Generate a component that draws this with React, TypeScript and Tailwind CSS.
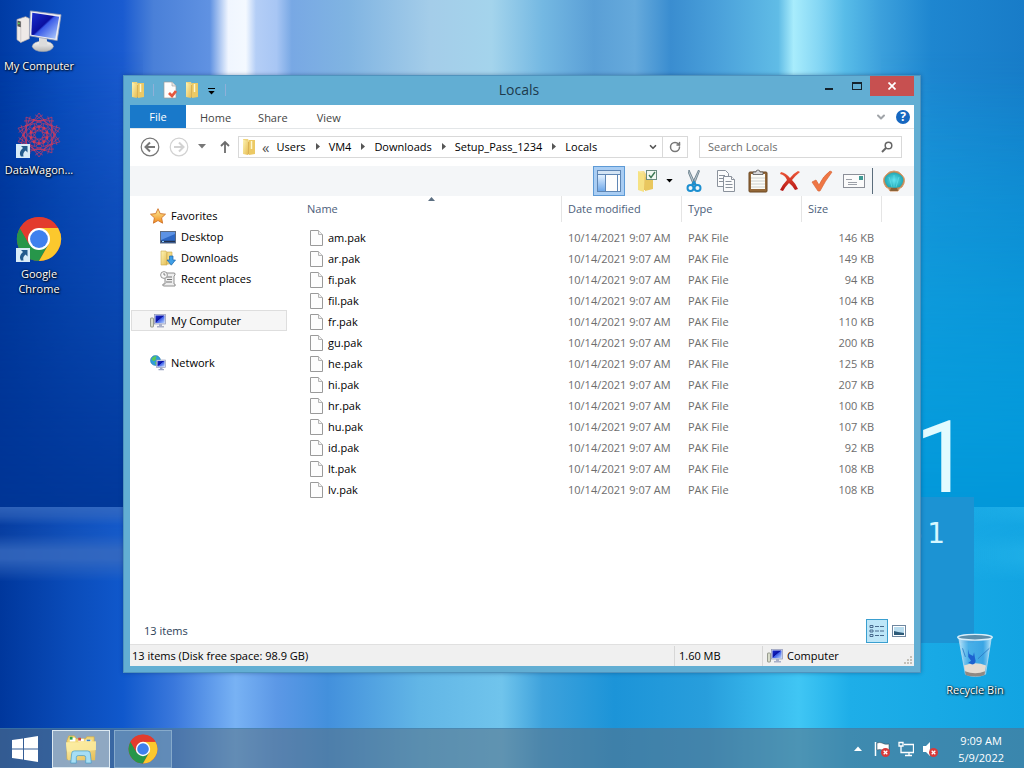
import React from "react";
import { ChevronDown, RotateCw } from "lucide-react";

type IconProps = { className?: string };

const files = [
  ["am.pak", "146 KB"],
  ["ar.pak", "149 KB"],
  ["fi.pak", "94 KB"],
  ["fil.pak", "104 KB"],
  ["fr.pak", "110 KB"],
  ["gu.pak", "200 KB"],
  ["he.pak", "125 KB"],
  ["hi.pak", "207 KB"],
  ["hr.pak", "100 KB"],
  ["hu.pak", "107 KB"],
  ["id.pak", "92 KB"],
  ["lt.pak", "108 KB"],
  ["lv.pak", "108 KB"],
];

function Gradients() {
  return (
    <svg className="absolute h-0 w-0" aria-hidden="true">
      <defs>
        <linearGradient id="screen" x1="0" y1="0" x2="1" y2="1">
          <stop offset="0" stopColor="#1a2fd0" />
          <stop offset="0.45" stopColor="#0a10a0" />
          <stop offset="0.5" stopColor="#3a5be8" />
          <stop offset="1" stopColor="#b9d6ff" />
        </linearGradient>
        <linearGradient id="folder" x1="0" y1="0" x2="1" y2="1">
          <stop offset="0" stopColor="#fdf4b4" />
          <stop offset="1" stopColor="#e6bd54" />
        </linearGradient>
        <linearGradient id="metal" x1="0" y1="0" x2="0" y2="1">
          <stop offset="0" stopColor="#fafafa" />
          <stop offset="1" stopColor="#b4b4b4" />
        </linearGradient>
        <linearGradient id="glass" x1="0" y1="0" x2="1" y2="0">
          <stop offset="0" stopColor="#d8f1ff" stopOpacity="0.85" />
          <stop offset="0.3" stopColor="#5fb4ea" stopOpacity="0.7" />
          <stop offset="0.75" stopColor="#4aa4e4" stopOpacity="0.7" />
          <stop offset="1" stopColor="#d8f1ff" stopOpacity="0.85" />
        </linearGradient>
        <linearGradient id="red" x1="0" y1="0" x2="0" y2="1">
          <stop offset="0" stopColor="#ef5a3a" />
          <stop offset="1" stopColor="#b51414" />
        </linearGradient>
        <linearGradient id="star" x1="0" y1="0" x2="0" y2="1">
          <stop offset="0" stopColor="#fff3a0" />
          <stop offset="1" stopColor="#f08a1a" />
        </linearGradient>
        <linearGradient id="pane" x1="0" y1="0" x2="0" y2="1">
          <stop offset="0" stopColor="#e3f1ff" />
          <stop offset="1" stopColor="#6ea8ea" />
        </linearGradient>
        <radialGradient id="shell">
          <stop offset="0" stopColor="#5fe0ee" />
          <stop offset="1" stopColor="#22a8b4" />
        </radialGradient>
      </defs>
    </svg>
  );
}

function ComputerIcon({ className }: IconProps) {
  return (
    <svg viewBox="0 0 48 48" className={className} aria-hidden="true">
      <path d="M1 12l9-3 4 2v21l-9 4-4-3z" fill="#efeae8" stroke="#b0a8a8" strokeWidth="0.7" />
      <path d="M5 14v22" stroke="#c8c2c2" strokeWidth="0.8" />
      <path d="M1.500 13l3.500 1v6l-3.500-1z" fill="#555" />
      <circle cx="3" cy="16" r="1" fill="#5fd65a" />
      <ellipse cx="28" cy="40" rx="11" ry="5.500" fill="url(#metal)" stroke="#aaa" strokeWidth="0.6" />
      <path d="M24 30l8 1 1 9h-9z" fill="#dcdcdc" />
      <path d="M15 3l32 4-4 27-29-5z" fill="#eceef4" stroke="#9aa0b4" strokeWidth="0.8" />
      <path d="M17 5l28 4-4 23-25-4z" fill="url(#screen)" />
    </svg>
  );
}

function SmallComputerIcon({ className }: IconProps) {
  return (
    <svg viewBox="0 0 16 16" className={className} aria-hidden="true">
      <rect x="0.500" y="5" width="3" height="9" rx="0.500" fill="#d8dccb" stroke="#83887c" strokeWidth="0.8" />
      <rect x="4.500" y="1.500" width="11" height="9.500" fill="#d9def0" stroke="#8d95b5" strokeWidth="0.7" />
      <rect x="5.500" y="2.500" width="9" height="7.500" fill="url(#screen)" />
      <path d="M9 11h3v2h2v1.500H7V13h2z" fill="#a9b0c8" />
    </svg>
  );
}

function NetworkIcon({ className }: IconProps) {
  return (
    <svg viewBox="0 0 16 16" className={className} aria-hidden="true">
      <circle cx="5.500" cy="5.500" r="5" fill="#2f9fd8" stroke="#1c6ea8" strokeWidth="0.5" />
      <path d="M1.500 4c2-3 4-3 5-3-1 2 0 2-1 4s-3 1-4-1zM5 7c2 0 3 1 2 3-1 0-2-1-2-3z" fill="#5cc657" />
      <rect x="6.500" y="5" width="9" height="7.500" fill="#d3daf0" stroke="#8d95b5" strokeWidth="0.6" />
      <rect x="7.500" y="6" width="7" height="5.500" fill="url(#screen)" />
      <path d="M10 12.500h2.500v1.500h1.500v1.200H8.500V14H10z" fill="#9aa4c4" />
    </svg>
  );
}

function ShortcutBadge() {
  return (
    <svg viewBox="0 0 14 14" className="absolute bottom-0 left-0 size-[14px]" aria-hidden="true">
      <rect width="14" height="14" fill="#d9ecf8" />
      <path d="M5 2h6.500v6.500L9.600 6.600C7.500 8.400 6.800 10 7.500 12.500H5C3 9.500 4 6.500 7 4z" fill="#235a8c" />
    </svg>
  );
}

function ChromeIcon({ className }: IconProps) {
  return (
    <svg viewBox="0 0 48 48" className={className} aria-hidden="true">
      <circle cx="24" cy="24" r="23" fill="#e33b2e" />
      <path d="M4.080 12.500A23 23 0 0 0 24 47L33.960 29.750 24 24 14.040 29.750z" fill="#27964a" />
      <path d="M43.920 12.500A23 23 0 0 1 24 47L33.960 29.750 24 12.500z" fill="#fcc82d" />
      <path d="M4.080 12.500A23 23 0 0 1 43.920 12.500H24L14.040 29.750z" fill="#e33b2e" />
      <circle cx="24" cy="24" r="11.500" fill="#fff" />
      <circle cx="24" cy="24" r="9.300" fill="#3f80ee" />
    </svg>
  );
}

const petals = Array.from({ length: 10 }, (_, i) => i * 36);

function WagonIcon({ className }: IconProps) {
  return (
    <svg viewBox="0 0 48 48" className={className} aria-hidden="true">
      <g fill="none" stroke="#b83a6a" strokeWidth="0.8">
        {petals.map((a) => (
          <g key={a} transform={`rotate(${a} 24 24)`}>
            <path d="M24 1L34 16 24 20 14 16zM20 3L36 14M28 3L12 14M19 15l11 2" />
            <circle cx="24" cy="15" r="1.300" fill="#dc3c50" stroke="none" />
            <circle cx="29" cy="8" r="0.900" fill="#dc3c50" stroke="none" />
          </g>
        ))}
      </g>
    </svg>
  );
}

function BinIcon({ className }: IconProps) {
  return (
    <svg viewBox="0 0 48 48" className={className} aria-hidden="true">
      <path d="M7 6h34l-6 38q-11 5-21 0z" fill="url(#glass)" stroke="#b9dcf0" strokeWidth="0.8" />
      <path d="M12.500 35q12-5 23 0l-1.500 9q-10 4-19.500 0z" fill="#e4dcd2" />
      <path d="M13.500 41q11 4 21 0l-.6 4q-9 3-19.600 0z" fill="#8f8983" />
      <path d="M17 18l1 5 4 2 1-4 1 6q2 6-3 7l-4-2 3-2-3-4z" fill="#1c62d0" />
      <path d="M39 17L27 28M14 26l-3-9" stroke="#2c7cc4" strokeWidth="0.9" fill="none" />
      <ellipse cx="24" cy="5.500" rx="18" ry="3" fill="#5c8daa" stroke="#d9eefa" strokeWidth="1.500" />
    </svg>
  );
}

function FolderIcon({ className }: IconProps) {
  return (
    <svg viewBox="0 0 16 18" className={className} aria-hidden="true">
      <path d="M2 1h5l1 2v13H2z" fill="#f0d47c" />
      <path d="M8 2h6v14l-6 1z" fill="#ecc964" />
      <path d="M2 1.500l5 2V17l-5-1z" fill="url(#folder)" />
      <path d="M10.500 3v8" stroke="#fdf6cc" strokeWidth="1.500" />
      <path d="M7.500 4v12.500" stroke="#c9983a" strokeWidth="0.6" />
    </svg>
  );
}

function DocumentCheckIcon({ className }: IconProps) {
  return (
    <svg viewBox="0 0 16 18" className={className} aria-hidden="true">
      <path d="M2 1h8l4 4v12H2z" fill="#fdfdfd" stroke="#9b9b9b" strokeWidth="0.7" />
      <path d="M10 1v4h4" fill="#e7e7e7" stroke="#9b9b9b" strokeWidth="0.6" />
      <path d="M7 12l3 3 4-5" fill="none" stroke="#e4573d" strokeWidth="2.800" />
    </svg>
  );
}

function FileIcon() {
  return (
    <svg viewBox="0 0 13 16" className="h-4 w-[13px] shrink-0" aria-hidden="true">
      <path d="M.5.5h8l4 4v11H.5z" fill="#fdfdfd" stroke="#9a9a9a" />
      <path d="M8.500.5v4h4" fill="#f1f1f1" stroke="#b4b4b4" />
    </svg>
  );
}

function StarIcon() {
  return (
    <svg viewBox="0 0 16 16" className="size-4" aria-hidden="true">
      <path d="M8 .7l2.200 4.900 5.300.6-3.900 3.600 1 5.400L8 12.500l-4.600 2.700 1-5.400L.5 6.200l5.300-.6z" fill="url(#star)" stroke="#d0742a" strokeWidth="0.9" />
    </svg>
  );
}

function DesktopIcon() {
  return (
    <svg viewBox="0 0 16 16" className="size-4" aria-hidden="true">
      <rect x="0.500" y="2.500" width="15" height="11.500" fill="#2d67c4" stroke="#5c6a80" />
      <path d="M1 3h14v2L1 11z" fill="#5c92e4" />
      <path d="M1 12.500h14" stroke="#23324e" strokeWidth="1.500" />
      <path d="M2 12.500h2" stroke="#8fd0ff" />
    </svg>
  );
}

function DownloadsIcon() {
  return (
    <svg viewBox="0 0 16 16" className="size-4" aria-hidden="true">
      <path d="M1 1h5l1 1.500V15H1z" fill="url(#folder)" stroke="#c9a84a" strokeWidth="0.6" />
      <path d="M7 2h5v12H7z" fill="#f3d983" stroke="#c9a84a" strokeWidth="0.6" />
      <path d="M9.500 6h3.500v4h2.500l-4.200 5.200L7 10h2.500z" fill="#3f9fe6" stroke="#1a65ac" strokeWidth="0.7" />
    </svg>
  );
}

function RecentIcon() {
  return (
    <svg viewBox="0 0 16 16" className="size-4" aria-hidden="true">
      <path d="M4 2h10q1.500 0 1 2l-1 1v8q2 0 1 2H4q-2 0-1-2h2V5z" fill="#eee" stroke="#858585" strokeWidth="0.9" />
      <path d="M7 6h5M7 8.500h5M6 11h6" stroke="#777" />
      <circle cx="4" cy="4" r="3.400" fill="#f8f8f8" stroke="#8a8a8a" strokeWidth="0.9" />
      <path d="M4 2v2h1.500" fill="none" stroke="#666" strokeWidth="0.8" />
    </svg>
  );
}

function Caret({ className }: IconProps) {
  return (
    <svg viewBox="0 0 8 5" className={className} aria-hidden="true">
      <path d="M0 0h8L4 4.500z" fill="currentColor" />
    </svg>
  );
}

function ToolButton({ label, children }: { label: string; children: React.ReactNode }) {
  return (
    <button aria-label={label} className="flex h-[30px] w-8 items-center justify-center">
      {children}
    </button>
  );
}

function Toolbar() {
  return (
    <div className="flex h-[30px] items-center justify-end bg-[#f4f6f8] pr-1" role="toolbar" aria-label="Classic toolbar">
      <button aria-label="Navigation pane" aria-pressed="true" className="flex h-[30px] w-8 items-center justify-center border border-[#5d9ad6] bg-[#a9cdf3]">
        <svg viewBox="0 0 24 22" className="h-[22px] w-6" aria-hidden="true">
          <rect x="0.500" y="0.500" width="23" height="21" fill="#fdfdfd" stroke="#5f86b4" />
          <path d="M1 1h22v3H1z" fill="#d4e4f4" />
          <path d="M1 4.500h22" stroke="#5f86b4" />
          <rect x="1" y="5" width="7" height="16" fill="url(#pane)" />
          <path d="M8.500 5v16M20.500 5v16" stroke="#5f86b4" />
        </svg>
      </button>
      <button aria-label="Folder options" className="ml-3 flex h-[30px] items-center gap-[7px]">
        <svg viewBox="0 0 22 24" className="h-6 w-[22px]" aria-hidden="true">
          <path d="M1 2h6l2 3v16H1z" fill="url(#folder)" />
          <path d="M8 8h8v12l-8 2z" fill="#e9c75e" />
          <path d="M1 2l6 4v17l-6-2z" fill="#f6e284" />
          <rect x="9.500" y="1.500" width="10" height="9" fill="#f2f8f2" stroke="#6a8a7e" />
          <path d="M12 6l2 2.500L18 3" fill="none" stroke="#3e7a54" strokeWidth="1.400" />
        </svg>
        <Caret className="h-1 w-[7px] text-black" />
      </button>
      <div className="w-[5px]" />
      <ToolButton label="Cut">
        <svg viewBox="0 0 16 24" className="h-6 w-4" aria-hidden="true">
          <path d="M3 1l6.500 14-2 1L2.500 4zM13.500 2L8 16l-2-1L12.500 1z" fill="#b9c8d2" stroke="#5d7480" strokeWidth="0.8" />
          <circle cx="4.500" cy="19" r="3" fill="none" stroke="#1c8fd0" strokeWidth="2" />
          <circle cx="11.500" cy="19" r="3" fill="none" stroke="#1c8fd0" strokeWidth="2" />
          <path d="M6 16l2-3 2 3" fill="none" stroke="#1c8fd0" strokeWidth="2" />
        </svg>
      </ToolButton>
      <ToolButton label="Copy">
        <svg viewBox="0 0 20 24" className="h-6 w-5" aria-hidden="true" stroke="#8b929c" fill="#fcfcfc">
          <path d="M1.500 1.500h8l3 3v13h-11z" />
          <path d="M3 6.500h6M3 9.500h4M3 12.500h4" />
          <path d="M7.500 7.500h8l3 3v12h-11z" />
          <path d="M15.500 7.500v3h3M9.500 12.500h6M9.500 15.500h7M9.500 18.500h7" />
        </svg>
      </ToolButton>
      <ToolButton label="Paste">
        <svg viewBox="0 0 20 24" className="h-6 w-5" aria-hidden="true">
          <rect x="1" y="3" width="18" height="20" rx="1" fill="#946838" stroke="#6c4822" />
          <rect x="3" y="5" width="14" height="15" fill="#fdfdf7" />
          <path d="M3 9h14M3 12h14M3 15h14M3 18h14" stroke="#bfc4c4" strokeWidth="0.8" />
          <path d="M5 5.500V3h3q0-2 2-2t2 2h3v2.500z" fill="#dadada" stroke="#555" strokeWidth="0.8" />
        </svg>
      </ToolButton>
      <ToolButton label="Delete">
        <svg viewBox="0 0 22 22" className="size-[22px]" aria-hidden="true">
          <path d="M2 2q5 1 9 6 4-5 8-7l2 1q-5 4-8 8 4 4 6 9l-3 1q-2-4-6-7-4 4-6 8l-3-1q3-6 7-10Q6 5 1 4z" fill="url(#red)" />
        </svg>
      </ToolButton>
      <ToolButton label="Properties">
        <svg viewBox="0 0 22 22" className="size-[22px]" aria-hidden="true">
          <path d="M1 12l4-2 3 5Q12 6 19 1l2 1Q14 11 9 21H7z" fill="#ef7645" stroke="#d9683a" strokeWidth="0.7" />
        </svg>
      </ToolButton>
      <ToolButton label="E-mail">
        <svg viewBox="0 0 22 14" className="h-[14px] w-[22px]" aria-hidden="true">
          <rect x="0.500" y="0.500" width="21" height="13" fill="#fbfbfb" stroke="#8b8f98" />
          <rect x="16" y="2" width="4" height="4" fill="#3e9a94" />
          <path d="M3 5.500h6M5 8.500h9M5 10.500h9" stroke="#9ca0a8" />
        </svg>
      </ToolButton>
      <div className="mr-[5px] ml-[2px] h-[26px] w-px bg-[#5b6d7c]" />
      <ToolButton label="Classic Shell settings">
        <svg viewBox="0 0 24 24" className="size-6" aria-hidden="true">
          <path d="M8 22q-1-3-4-4-5-7 0-12 3-4 8-4t8 4q5 5 0 12-3 1-4 4z" fill="#b98a5a" stroke="#d99a68" strokeWidth="1" />
          <path d="M6 18Q-1 9 7 5q5-3 10 0 8 4 1 13l-5 1z" fill="url(#shell)" />
          <path d="M12 18V6M10 18L7 8M14 18l3-10" stroke="#6feaf2" strokeWidth="0.5" />
          <path d="M8 22l1-3h6l1 3z" fill="#8a6238" />
        </svg>
      </ToolButton>
    </div>
  );
}

function TitleBar() {
  return (
    <header className="grid h-[29px] grid-cols-[1fr_auto_1fr]">
      <div className="flex h-[27px] items-center">
        <FolderIcon className="h-[18px] w-4" />
        <div className="ml-[7px] h-3 w-px bg-[#8fb0d8]" />
        <button aria-label="Properties" className="ml-2">
          <DocumentCheckIcon className="h-[18px] w-4" />
        </button>
        <button aria-label="New folder" className="ml-[6px]">
          <FolderIcon className="h-[18px] w-4" />
        </button>
        <button aria-label="Customize quick access" className="ml-2 flex flex-col items-center gap-[2px] pt-1">
          <span className="h-px w-[7px] bg-black" />
          <Caret className="h-1 w-[7px] text-black" />
        </button>
        <div className="ml-[10px] h-3 w-px bg-[#8fb0d8]" />
      </div>
      <h1 className="pt-1 pr-[6px] text-[14px] leading-5 text-[#1d3a4c]">Locals</h1>
      <div className="flex h-full items-start justify-end">
        <button aria-label="Minimize" className="flex h-5 w-7 items-center justify-center pt-[6px]">
          <span className="h-[2px] w-2 bg-[#14222c]" />
        </button>
        <button aria-label="Maximize" className="flex h-5 w-[27px] items-center justify-center">
          <span className="h-2 w-[10px] border border-t-2 border-[#14222c]" />
        </button>
        <button aria-label="Close" className="flex h-5 w-11 items-center justify-center bg-[#c75050]">
          <svg viewBox="0 0 8 8" className="size-2" aria-hidden="true">
            <path d="M.5.5l7 7M7.500.5l-7 7" stroke="#fff" strokeWidth="1.700" />
          </svg>
        </button>
      </div>
    </header>
  );
}

function Ribbon() {
  return (
    <nav className="flex h-6 items-center border-b border-[#e3e6e8] text-[#444]" aria-label="Ribbon tabs">
      <button className="h-[23px] w-14 bg-[#1979ca] text-white">File</button>
      <button className="ml-[6px] px-2 pt-[2px]">Home</button>
      <button className="ml-[11px] px-2 pt-[2px]">Share</button>
      <button className="ml-[13px] px-2 pt-[2px]">View</button>
      <button aria-label="Expand ribbon" className="ml-auto">
        <ChevronDown className="size-3 text-[#a0a4a8]" strokeWidth={4} />
      </button>
      <button aria-label="Help" className="mr-1 ml-[9px] flex size-[14px] items-center justify-center rounded-full bg-[#1667c0] text-[12px] leading-none font-bold text-white">
        ?
      </button>
    </nav>
  );
}

function AddressRow() {
  const crumbs = ["Users", "VM4", "Downloads", "Setup_Pass_1234", "Locals"];
  return (
    <div className="flex h-[37px] items-center pr-3 pb-[2px] pl-[10px]">
      <button aria-label="Back">
        <svg viewBox="0 0 20 20" className="size-5" fill="none" stroke="#777" aria-hidden="true">
          <circle cx="10" cy="10" r="8.800" strokeWidth="1.200" />
          <path d="M15 10H6M10 5.500L5.500 10l4.500 4.500" strokeWidth="2" />
        </svg>
      </button>
      <button aria-label="Forward" className="ml-[9px]">
        <svg viewBox="0 0 20 20" className="size-5" fill="none" stroke="#d2d2d2" aria-hidden="true">
          <circle cx="10" cy="10" r="8.800" strokeWidth="1.200" />
          <path d="M5 10h9M10 5.500l4.500 4.500-4.500 4.500" strokeWidth="2" />
        </svg>
      </button>
      <button aria-label="Recent locations" className="ml-[9px]">
        <Caret className="h-[5px] w-2 text-[#777]" />
      </button>
      <button aria-label="Up" className="ml-[13px]">
        <svg viewBox="0 0 12 14" className="h-[14px] w-3" fill="none" stroke="#6d6d6d" strokeWidth="1.800" aria-hidden="true">
          <path d="M6 13V2.500M2 6l4-4 4 4" />
        </svg>
      </button>
      <div className="ml-[7px] flex h-[22px] min-w-0 flex-1 border border-[#d9d9d9] text-black">
        <div className="flex min-w-0 flex-1 items-center pl-[2px]">
          <FolderIcon className="h-[18px] w-4 shrink-0" />
          <span className="mr-[7px] ml-[5px] text-[15px] leading-4 text-[#555]">«</span>
          {crumbs.map((c, i) => (
            <React.Fragment key={c}>
              {i > 0 && (
                <svg viewBox="0 0 4 7" className="mr-[9px] ml-[10px] h-[7px] w-1 shrink-0" aria-hidden="true">
                  <path d="M0 0l4 3.500L0 7z" fill="#555" />
                </svg>
              )}
              <button>{c}</button>
            </React.Fragment>
          ))}
          <button aria-label="Previous locations" className="mr-1 ml-auto">
            <ChevronDown className="size-[10px] text-[#555]" strokeWidth={4} />
          </button>
        </div>
        <button aria-label="Refresh" className="flex w-[25px] items-center justify-center border-l border-[#d9d9d9]">
          <RotateCw className="size-3 text-[#777]" strokeWidth={3} />
        </button>
      </div>
      <label className="ml-[11px] flex h-[22px] w-[203px] items-center border border-[#d9d9d9] px-2">
        <input type="search" aria-label="Search Locals" placeholder="Search Locals" className="min-w-0 flex-1 bg-transparent outline-none placeholder:text-[#6d6d6d]" />
        <svg viewBox="0 0 12 12" className="size-3 shrink-0" fill="none" stroke="#666" aria-hidden="true">
          <circle cx="7.500" cy="4.500" r="3.300" strokeWidth="1.500" />
          <path d="M5 7L1 11" strokeWidth="2" />
        </svg>
      </label>
    </div>
  );
}

function Sidebar() {
  const item = "flex h-[21px] w-full items-center gap-[5px]";
  return (
    <aside className="w-[163px] shrink-0 pt-[9px] text-black">
      <button className={`${item} pl-5`}><StarIcon />Favorites</button>
      <button className={`${item} pl-[30px]`}><DesktopIcon />Desktop</button>
      <button className={`${item} pl-[30px]`}><DownloadsIcon />Downloads</button>
      <button className={`${item} pl-[30px]`}><RecentIcon />Recent places</button>
      <div className="mt-[21px] mr-[6px] ml-px">
        <button className="flex h-[21px] w-full items-center gap-[5px] border border-[#dedede] bg-[#f6f6f6] pl-[18px]">
          <SmallComputerIcon className="size-4" />My Computer
        </button>
      </div>
      <button className={`${item} mt-[21px] pl-5`}><NetworkIcon className="size-4" />Network</button>
    </aside>
  );
}

function FileTable() {
  const head = "h-[26px] border-r border-[#e5e5e5] pt-[5px] text-left font-normal leading-4 text-[#4c607a]";
  return (
    <main className="relative min-w-0 flex-1 overflow-hidden pl-[10px]">
      <svg viewBox="0 0 7 4" className="absolute top-px left-[135px] h-1 w-[7px]" aria-hidden="true">
        <path d="M0 4l3.500-4L7 4z" fill="#5c6f82" />
      </svg>
      <table className="w-[579px] table-fixed border-collapse">
        <colgroup>
          <col className="w-[259px]" />
          <col className="w-[120px]" />
          <col className="w-[120px]" />
          <col className="w-[80px]" />
        </colgroup>
        <thead>
          <tr className="h-[31px] align-top">
            <th className="p-0"><div className={`${head} pl-1`}>Name</div></th>
            <th className="p-0"><div className={`${head} pl-[6px]`}>Date modified</div></th>
            <th className="p-0"><div className={`${head} pl-[6px]`}>Type</div></th>
            <th className="p-0"><div className={`${head} pl-[6px]`}>Size</div></th>
          </tr>
        </thead>
        <tbody className="text-[#6d6d6d]">
          {files.map(([name, size]) => (
            <tr key={name} className="h-[21px]">
              <td className="p-0 pl-[7px] text-black">
                <span className="flex items-center gap-[5px]"><FileIcon />{name}</span>
              </td>
              <td className="p-0 pl-[6px] whitespace-nowrap">10/14/2021 9:07 AM</td>
              <td className="p-0 pl-[6px]">PAK File</td>
              <td className="p-0 pr-2 text-right">{size}</td>
            </tr>
          ))}
        </tbody>
      </table>
    </main>
  );
}

function ExplorerWindow() {
  return (
    <section aria-label="Locals" className="absolute top-[75px] right-[103px] bottom-[95px] left-[123px] flex flex-col border border-[#4f93bd] bg-[#62aed3] px-[6px] pb-[6px] shadow-[0_0_4px_rgba(0,40,90,0.4)]">
      <TitleBar />
      <div className="flex min-h-0 flex-1 flex-col bg-white">
        <Ribbon />
        <AddressRow />
        <Toolbar />
        <div className="flex min-h-0 flex-1">
          <Sidebar />
          <FileTable />
        </div>
        <div className="flex h-7 items-center pt-[2px] pl-[14px] text-[#2c3e57]">
          <span>13 items</span>
          <button aria-label="Details view" aria-pressed="true" className="ml-auto flex h-6 w-[22px] items-center justify-center border border-[#3a9fd0] bg-[#bde6f8]">
            <svg viewBox="0 0 16 14" className="h-[14px] w-4" fill="none" stroke="#47698c" aria-hidden="true">
              <path d="M1 1.500h3v2H1zM1 6h3v2H1zM1 10.500h3v2H1z" />
              <path d="M6 2.500h4M11 2.500h4M6 7h4M11 7h4M6 11.500h4M11 11.500h4" />
            </svg>
          </button>
          <button aria-label="Thumbnail view" className="mr-2 ml-1">
            <svg viewBox="0 0 14 12" className="h-3 w-[14px]" aria-hidden="true">
              <rect x="0.500" y="0.500" width="13" height="11" fill="#fff" stroke="#6f87a0" />
              <rect x="2" y="2" width="10" height="8" fill="#b9dcee" />
              <path d="M2 6l4 1 6 1v2H2z" fill="#2d5a78" />
            </svg>
          </button>
        </div>
        <footer className="flex h-[22px] items-center border-t border-[#e0e0e0] bg-[#f0f0f0] text-black">
          <span className="flex-1 pl-[2px]">13 items (Disk free space: 98.9 GB)</span>
          <span className="flex h-5 w-[88px] items-center border-l border-[#d7d7d7] pl-1">1.60 MB</span>
          <span className="flex h-5 w-[152px] items-center gap-1 border-l border-[#d7d7d7] pl-1">
            <SmallComputerIcon className="size-4" />Computer
            <svg viewBox="0 0 9 9" className="mt-2 mr-[2px] ml-auto size-[9px]" fill="#c4c0b8" aria-hidden="true">
              <path d="M7 1h2v2H7zM7 4h2v2H7zM7 7h2v2H7zM4 4h2v2H4zM4 7h2v2H4zM1 7h2v2H1z" />
            </svg>
          </span>
        </footer>
      </div>
    </section>
  );
}

function DesktopShortcut({ label, children }: { label: React.ReactNode; children: React.ReactNode }) {
  return (
    <button className="flex h-[104px] w-[78px] flex-col items-center gap-1 text-center leading-[15px] text-white [text-shadow:1px_1px_2px_#000,0_0_2px_#000]">
      <span className="relative flex size-[46px] items-center justify-center">{children}</span>
      <span>{label}</span>
    </button>
  );
}

function RedCross() {
  return (
    <>
      <circle cx="11.500" cy="11.500" r="4.500" fill="#d83a3a" />
      <path d="M9.700 9.700l3.600 3.600M13.300 9.700l-3.600 3.600" stroke="#fff" strokeWidth="1.300" />
    </>
  );
}

function Taskbar() {
  return (
    <footer className="absolute inset-x-0 bottom-0 flex h-10 items-center border-t border-[#3c7fb0]/50 bg-[#55738a]/60 text-white">
      <button aria-label="Start" className="flex h-full w-[52px] items-center pl-3">
        <svg viewBox="0 0 26 26" className="size-[26px]" fill="#fff" aria-hidden="true">
          <path d="M0 4l11-1.600V12.400H0zM12 2.200L26 0v12.400H12zM0 13.500h11v10L0 22zM12 13.500h14V26l-14-2.200z" />
        </svg>
      </button>
      <button aria-label="File Explorer" className="flex h-[38px] w-[58px] items-center justify-center border border-[#dce9f2] bg-[#a5b9cb]/80">
        <svg viewBox="0 0 34 32" className="h-[30px] w-[34px]" aria-hidden="true">
          <path d="M2 7l2-5h6l2 3h10l1-2h8v24H2z" fill="#f3d878" stroke="#d2a941" strokeWidth="0.7" />
          <path d="M5 4h6v4H5zM14 5h6v3h-6zM22 6h6v3h-6z" fill="#fff" />
          <path d="M5 3h3v3H5z" fill="#2fa24a" />
          <path d="M14 4h3v3h-3z" fill="#d2473c" />
          <path d="M23 6h4v2h-4z" fill="#3a83c8" />
          <path d="M1 9h14l2-1h16l-1 20H3z" fill="url(#folder)" />
          <path d="M1 9h14l2-1h16v9q-16 2-31 2z" fill="#fbeb9f" opacity="0.8" />
          <path d="M6 31l1-10q0-3 3-3h14q3 0 3 3l1 10h-6v-6q0-2-2-2h-6q-2 0-2 2v6z" fill="#a6def5" stroke="#4d9fc8" strokeWidth="0.8" />
        </svg>
      </button>
      <button aria-label="Google Chrome" className="ml-1 flex h-[38px] w-[58px] items-center justify-center border border-[#86aacb] bg-[#6c95bd]/70">
        <ChromeIcon className="size-[30px]" />
      </button>
      <div className="ml-auto flex items-center">
        <button aria-label="Show hidden icons" className="mr-3">
          <Caret className="h-[5px] w-2 rotate-180 text-white" />
        </button>
        <svg viewBox="0 0 16 16" className="mr-2 size-4" aria-label="Action Center" role="img">
          <path d="M1.500 1v14" stroke="#fff" strokeWidth="1.500" />
          <path d="M3 2q3-1 5 0 3 2 7 1v7q-4 1-7-1-2-1-5 0z" fill="#fff" stroke="#33434e" strokeWidth="0.5" />
          <RedCross />
        </svg>
        <svg viewBox="0 0 16 16" className="mr-2 size-4" fill="none" stroke="#fff" aria-label="Network" role="img">
          <path d="M6 3.500h9.500v8H6" strokeWidth="1.300" />
          <path d="M11 12v2.500M7 14.500h7" strokeWidth="1.300" />
          <path d="M1 1.500h4v3.500H1zM3 5v6.500h3" strokeWidth="1.300" />
        </svg>
        <svg viewBox="0 0 16 16" className="mr-5 size-4" aria-label="Volume muted" role="img">
          <path d="M1 5h3l4-4v14l-4-4H1z" fill="#fff" />
          <RedCross />
        </svg>
        <time className="mr-5 text-center leading-[17px]">
          9:09 AM
          <br />
          5/9/2022
        </time>
      </div>
    </footer>
  );
}

export default function App() {
  return (
    <div className="relative h-screen min-h-[600px] overflow-hidden bg-[linear-gradient(90deg,#00379c_0%,#0a4cba_7%,#1058cc_12%,#3a78dc_17%,#78b2f4_23%,#5c98e6_27%,#4390dc_32%,#62b6e6_41%,#70c4ec_49%,#3ea2dc_53%,#1c94d8_60%,#289edc_69%,#40c6f4_78%,#1eaee8_83%,#12a4e2_100%)] font-['Open_Sans','Noto_Sans',sans-serif] text-[11px] leading-4">
      <Gradients />
      <div className="absolute inset-0 bg-[linear-gradient(90deg,#003ba4_0%,#0b4fc0_6%,#1a5bd0_12%,#4a80d8_15%,#6092e2_20.500%,#f0f6ff_22.300%,#f4f9ff_24%,#b4cef6_25%,#a8c6f4_27%,#78a8e4_28.500%,#80b4e2_34%,#a4cde9_42%,#a4d4ec_48%,#74b8e2_53%,#5a9fd6_58%,#66aadc_62%,#3a8dd0_65.500%,#4aa0da_70%,#60bce6_76%,#a8ecfc_77.500%,#84d6f4_80%,#58bce8_82.500%,#3ca0dc_86%,#1e86d0_91%,#187cc8_100%)] [mask-image:linear-gradient(#000,#000_10%,transparent_55%)]" />
      <div className="absolute top-0 left-0 h-[66%] w-[14%] bg-[#003595] [mask-image:linear-gradient(transparent_10%,rgba(0,0,0,0.9))]" />
      <div className="absolute top-0 right-0 h-[66%] w-[14%] bg-[#0096d8] [mask-image:linear-gradient(transparent_10%,rgba(0,0,0,0.9))]" />
      <div className="absolute inset-x-0 top-[66%] h-[15%] bg-[linear-gradient(90deg,#3a6cc0,#3a6cc0_12%,transparent_30%,transparent_90%,#20b0e8)] opacity-80 [mask-image:linear-gradient(#000,rgba(0,0,0,0.7)_8%,rgba(0,0,0,0.15)_16%,rgba(0,0,0,0.2)_24%,#000_38%,#000_45%,transparent_65%)]" />

      <div className="absolute right-[50px] bottom-[125px] h-[146px] w-[120px] bg-[#1c93d3]" />
      <div className="absolute right-[53px] bottom-[274px] font-['Roboto',sans-serif] text-[100px] leading-[72px] text-[#e2fbff]">1</div>
      <div className="absolute right-[79px] bottom-[219px] flex gap-1 font-['DejaVu_Sans',sans-serif] text-[28px] leading-[30px] text-[#d6f7ff]">
        <span>5</span>
        <span>1</span>
      </div>

      <div className="absolute top-2 left-0 flex flex-col">
        <DesktopShortcut label="My Computer">
          <ComputerIcon className="size-[46px]" />
        </DesktopShortcut>
        <DesktopShortcut label="DataWagon...">
          <WagonIcon className="size-[46px]" />
          <ShortcutBadge />
        </DesktopShortcut>
        <DesktopShortcut label={<>Google<br />Chrome</>}>
          <ChromeIcon className="size-[46px]" />
          <ShortcutBadge />
        </DesktopShortcut>
      </div>
      <div className="absolute right-[10px] bottom-8">
        <DesktopShortcut label="Recycle Bin">
          <BinIcon className="size-[46px]" />
        </DesktopShortcut>
      </div>

      <ExplorerWindow />
      <Taskbar />
    </div>
  );
}
